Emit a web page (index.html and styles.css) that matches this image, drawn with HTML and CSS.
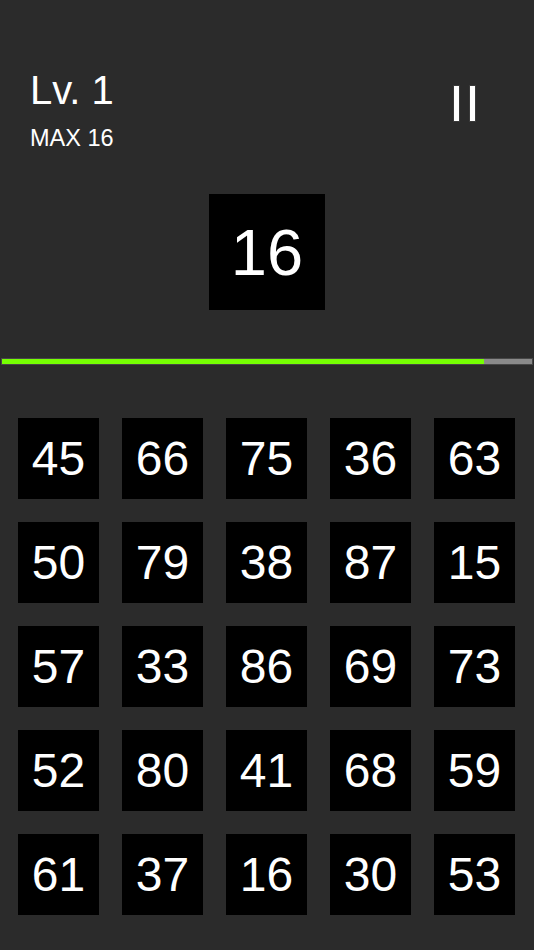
FILE: index.html
```html
<!DOCTYPE html>
<html>
<head>
<meta charset="utf-8">
<link rel="stylesheet" href="styles.css">
</head>
<body>
<div class="screen">
  <div class="top">
    <div class="info">
      <div class="level">Lv. 1</div>
      <div class="max">MAX 16</div>
    </div>
    <div class="pause">
      <svg width="24" height="38" viewBox="0 0 24 38">
        <rect x="0.5" y="0.5" width="6" height="36" fill="#fff" stroke="#3a3a3a" stroke-width="1"/>
        <rect x="16.5" y="0.5" width="6" height="36" fill="#fff" stroke="#3a3a3a" stroke-width="1"/>
      </svg>
    </div>
  </div>
  <div class="target">16</div>
  <div class="bar"><div class="fill" style="width:90.9%"></div></div>
  <div class="grid">
    <div class="tile">45</div><div class="tile">66</div><div class="tile">75</div><div class="tile">36</div><div class="tile">63</div>
    <div class="tile">50</div><div class="tile">79</div><div class="tile">38</div><div class="tile">87</div><div class="tile">15</div>
    <div class="tile">57</div><div class="tile">33</div><div class="tile">86</div><div class="tile">69</div><div class="tile">73</div>
    <div class="tile">52</div><div class="tile">80</div><div class="tile">41</div><div class="tile">68</div><div class="tile">59</div>
    <div class="tile">61</div><div class="tile">37</div><div class="tile">16</div><div class="tile">30</div><div class="tile">53</div>
  </div>
</div>
</body>
</html>
```
FILE: styles.css
```css
html, body {
  margin: 0;
  padding: 0;
  background: #2b2b2b;
}
.screen {
  width: 534px;
  height: 950px;
  overflow: hidden;
  font-family: "Liberation Sans", Arial, sans-serif;
  color: #fff;
}
.top {
  display: flex;
  align-items: flex-start;
  justify-content: space-between;
  padding: 70px 57px 0 30px;
}
.level {
  font-size: 40px;
  line-height: 40px;
}
.max {
  margin-top: 17px;
  font-size: 23.5px;
  line-height: 22px;
}
.pause {
  margin-top: 15px;
}
.pause svg {
  display: block;
}
.target {
  width: 116px;
  height: 116px;
  margin: 45px auto 0;
  background: #000;
  display: flex;
  align-items: center;
  justify-content: center;
  font-size: 65px;
  line-height: 1;
}
.bar {
  margin: 48px 1px 0;
  height: 5px;
  border: 1px solid #474747;
  background: #8a8a8a;
  display: flex;
}
.fill {
  background: #76ff03;
  height: 100%;
}
.grid {
  margin-top: 53px;
  padding-left: 18px;
  display: grid;
  grid-template-columns: repeat(5, 81px);
  grid-auto-rows: 81px;
  column-gap: 23px;
  row-gap: 23px;
}
.tile {
  background: #000;
  display: flex;
  align-items: center;
  justify-content: center;
  font-size: 48px;
  line-height: 1;
}
```
